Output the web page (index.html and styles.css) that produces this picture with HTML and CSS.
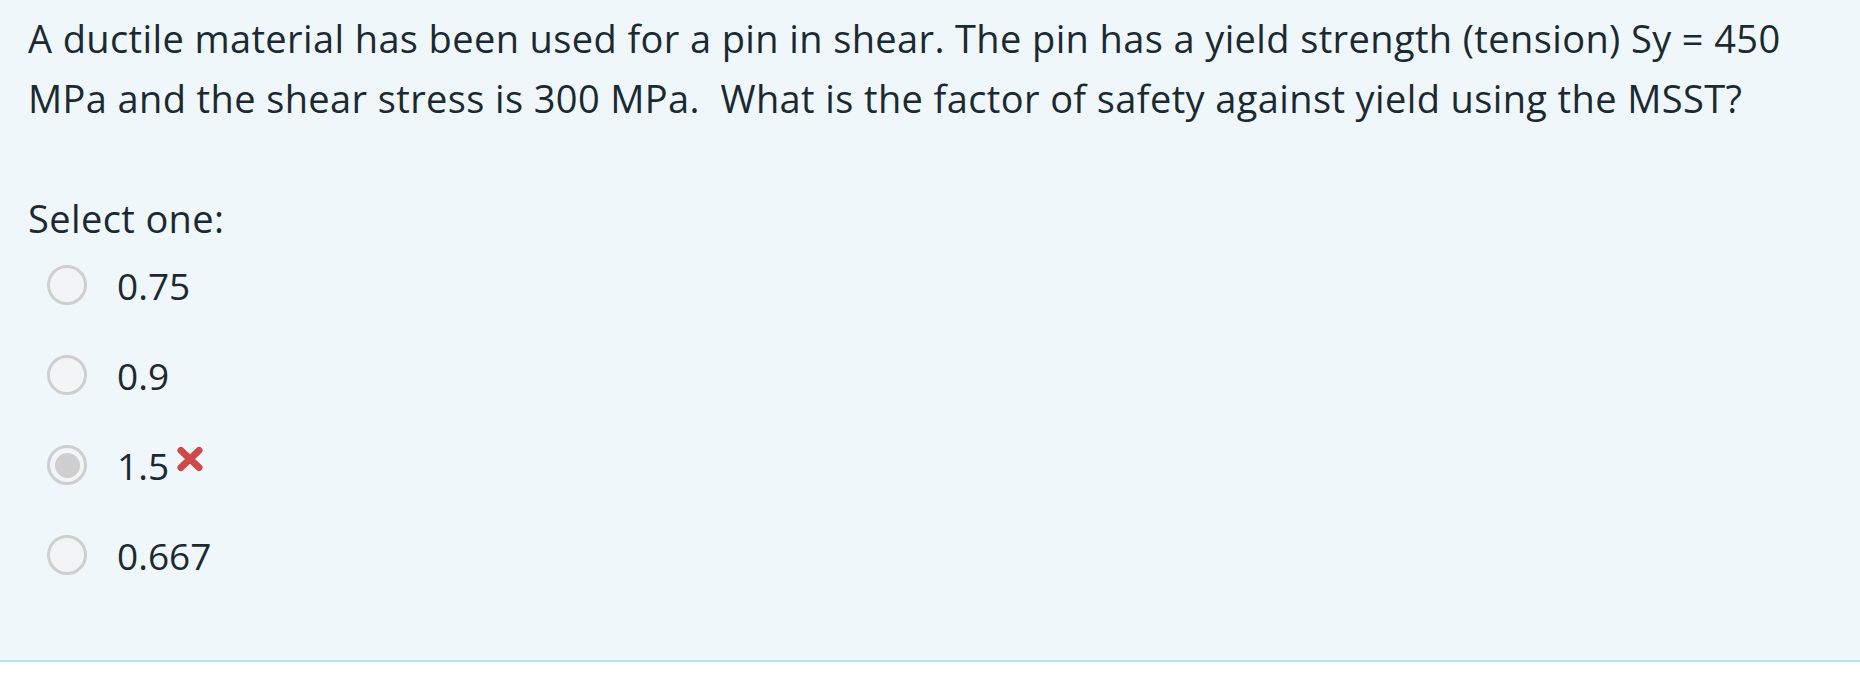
FILE: index.html
```html
<!DOCTYPE html>
<html lang="en">
<head>
<meta charset="utf-8">
<link rel="stylesheet" href="styles.css">
</head>
<body>
<div class="que">
  <div class="qtext">A ductile material has been used for a pin in shear. The pin has a yield strength (tension) Sy = 450 MPa and the shear stress is 300 MPa.&nbsp; What is the factor of safety against yield using the MSST?</div>
  <div class="ablock">
    <div class="prompt">Select one:</div>
    <div class="answer">
      <div class="opt"><span class="radio"></span><span class="label">0.75</span></div>
      <div class="opt"><span class="radio"></span><span class="label">0.9</span></div>
      <div class="opt"><span class="radio checked"></span><span class="label">1.5</span><svg class="wrong" viewBox="0 0 28 26" width="28" height="26"><path d="M5 4.5 L23 21.5 M23 4.5 L5 21.5" stroke="#d0494a" stroke-width="7" stroke-linecap="round"/></svg></div>
      <div class="opt"><span class="radio"></span><span class="label">0.667</span></div>
    </div>
  </div>
</div>
</body>
</html>
```
FILE: styles.css
```css
html, body {
  margin: 0;
  padding: 0;
  background: #ffffff;
}
body {
  font-family: "Open Sans", "Noto Sans", sans-serif;
  color: #1b2a31;
}
.que {
  background: #eff7fb;
  border-bottom: 2px solid #b8e2ee;
  padding: 8px 28px 0 28px;
  height: 652px;
  box-sizing: content-box;
}
.qtext {
  font-size: 38px;
  letter-spacing: 0.38px;
  line-height: 60px;
}
.ablock {
  margin-top: 60px;
}
.prompt {
  font-size: 38px;
  letter-spacing: 0.38px;
  line-height: 60px;
}
.answer {
  margin-top: -8px;
}
.opt {
  display: flex;
  align-items: center;
  height: 90px;
  padding-left: 19px;
}
.radio {
  width: 34px;
  height: 34px;
  border: 3px solid #cfcfcf;
  border-radius: 50%;
  background: #f2f4f5;
  display: flex;
  align-items: center;
  justify-content: center;
  flex: none;
}
.radio.checked::after {
  content: "";
  width: 25px;
  height: 25px;
  border-radius: 50%;
  background: #cfcfcf;
}
.label {
  font-size: 37px;
  margin-left: 30px;
}
.wrong {
  margin-left: 7px;
  margin-top: -12px;
}
```
